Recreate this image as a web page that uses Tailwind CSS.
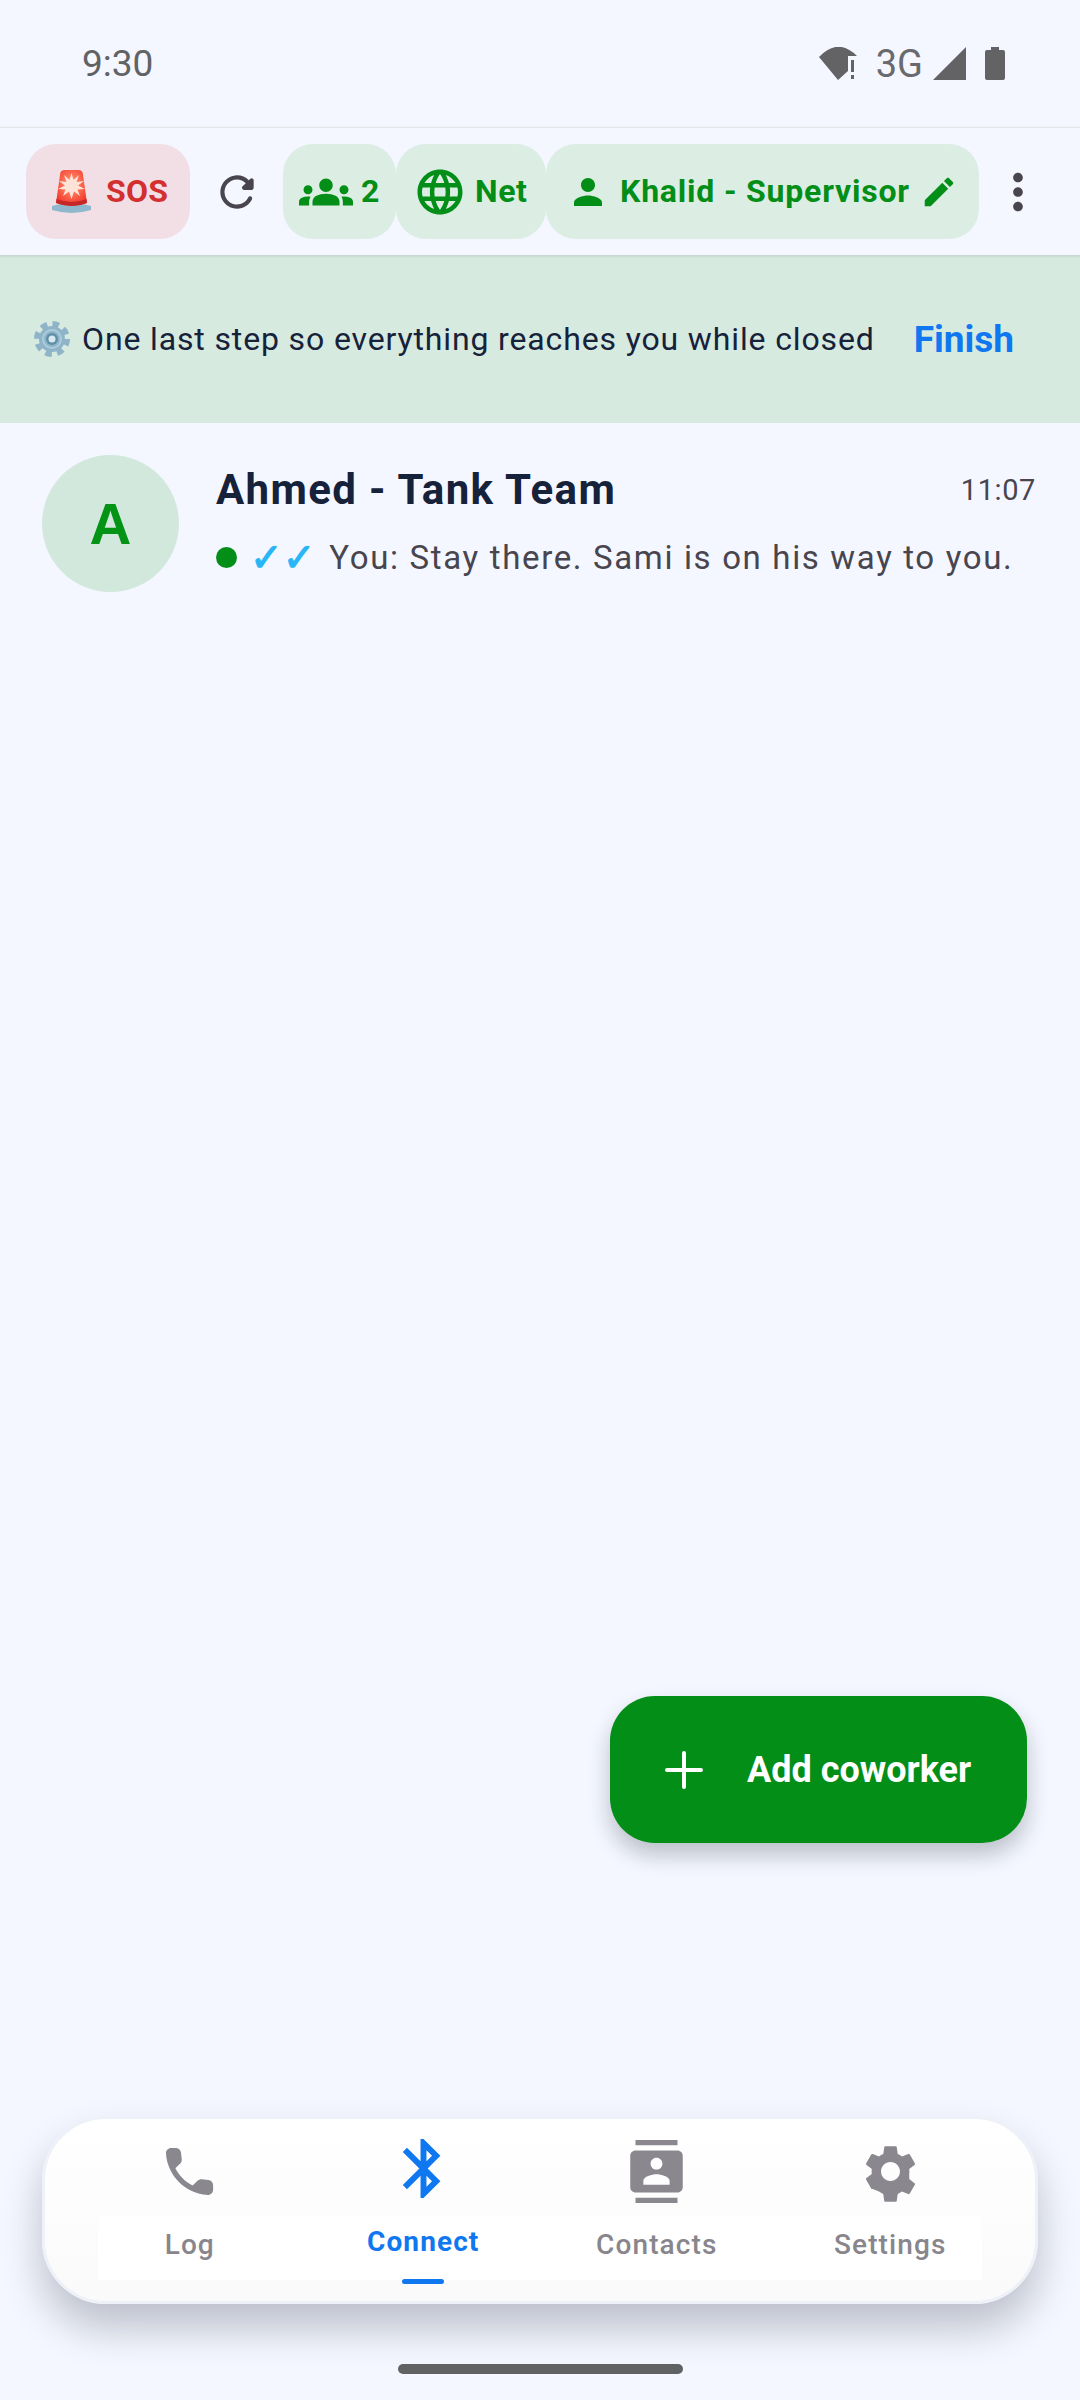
<!doctype html>
<html>
<head>
<meta charset="utf-8">
<script src="https://cdn.jsdelivr.net/npm/@tailwindcss/browser@4"></script>
</head>
<body>
<div class="relative flex flex-col w-[1080px] h-[2400px] overflow-hidden bg-[#f4f7ff] font-['Roboto',sans-serif]">

  <!-- status bar -->
  <div class="flex items-center h-[127px] pl-[82px] pr-[75px] text-[#616264] shrink-0">
    <span class="text-[37px] leading-none">9:30</span>
    <div class="ml-auto flex items-center">
      <svg class="w-[38px] h-[33px]" viewBox="0 0 38 33" fill="#636366"><path d="M0 10Q19 -10 38 9L29 9L29 24L19 33Z"/><rect x="32" y="13" width="3" height="12"/><rect x="32" y="28" width="3" height="4"/></svg>
      <span class="ml-[19px] text-[38px] leading-none text-[#6a6a6e]">3G</span>
      <svg class="ml-[10px] w-[33px] h-[33px]" viewBox="0 0 33 33" fill="#636366"><path d="M0 33L33 0V33Z"/></svg>
      <svg class="ml-[19px] w-[20px] h-[33px]" viewBox="0 0 20 33" fill="#636366"><path d="M6 0H14V3H18Q20 3 20 5V31Q20 33 18 33H2Q0 33 0 31V5Q0 3 2 3H6Z"/></svg>
    </div>
  </div>

  <!-- app bar -->
  <div class="flex items-center h-[128px] pl-[26px] border-t-[1px] border-[#e4e6ea] shrink-0 shadow-[0_1px_3px_rgba(0,0,0,0.12)] relative z-10 bg-[#f4f7ff]">
    <div class="flex items-center w-[164px] h-[95px] rounded-[30px] bg-[#f2dfe5] pl-[26px]">
      <svg class="w-[39px] h-[43px] shrink-0" viewBox="0 0 39 43">
        <defs>
          <radialGradient id="glow" cx="0.5" cy="0.4" r="0.6"><stop offset="0" stop-color="#ffd6c8"/><stop offset="0.35" stop-color="#ff7a5c"/><stop offset="1" stop-color="#f03a2e"/></radialGradient>
        </defs>
        <path d="M0 36Q20 29 39 36V40Q20 46 0 40Z" fill="#8fb8cc"/>
        <path d="M8 5Q8 0 13 0H26Q31 0 31 5L35 33Q20 39 4 33Z" fill="url(#glow)"/>
        <path d="M4.5 29Q20 35 34.5 29L35 33Q20 39 4 33Z" fill="#c62828"/>
        <path d="M19.5 3L21.5 10L27 5L24.5 12L32 11L26 15.5L33 19L25.5 19.5L28 26L22 21.5L19.5 29L17 21.5L11 26L13.5 19.5L6 19L13 15.5L7 11L14.5 12L12 5L17.5 10Z" fill="#ffe3d8"/>
      </svg>
      <span class="ml-[15px] mb-[2px] text-[32px] leading-none font-bold text-[#d32f2f] tracking-[0.3px]">SOS</span>
    </div>
    <svg class="w-[50px] h-[50px] ml-[22px] shrink-0" viewBox="0 0 24 24" fill="#48454e"><path d="M17.65 6.35c-1.63-1.63-3.94-2.57-6.48-2.31-3.67.37-6.69 3.35-7.1 7.02C3.52 15.91 7.27 20 12 20c3.19 0 5.93-1.87 7.21-4.56.32-.67-.16-1.44-.9-1.44-.37 0-.72.2-.88.53-1.13 2.43-3.84 3.97-6.8 3.31-2.22-.49-4.01-2.3-4.48-4.52C5.31 9.44 8.26 6 12 6c1.66 0 3.14.69 4.22 1.78l-1.51 1.51c-.63.63-.19 1.71.7 1.71H19c.55 0 1-.45 1-1V6.41c0-.89-1.08-1.34-1.71-.71l-.64.65z"/></svg>
    <div class="flex items-center w-[113px] h-[95px] ml-[21px] rounded-[30px] bg-[#dcede4] pl-[16px] text-[#038e17]">
      <svg class="w-[54px] h-[54px] shrink-0" viewBox="0 0 24 24" fill="currentColor"><path d="M12 12.75c1.63 0 3.07.39 4.24.9 1.08.48 1.76 1.56 1.76 2.73V18H6v-1.61c0-1.18.68-2.26 1.76-2.73 1.17-.52 2.61-.91 4.24-.91zM4 13c1.1 0 2-.9 2-2s-.9-2-2-2-2 .9-2 2 .9 2 2 2zm1.13 1.1c-.37-.06-.74-.1-1.13-.1-.99 0-1.93.21-2.78.58C.48 14.9 0 15.62 0 16.43V18h4.5v-1.61c0-.83.23-1.61.63-2.29zM20 13c1.1 0 2-.9 2-2s-.9-2-2-2-2 .9-2 2 .9 2 2 2zm4 3.43c0-.81-.48-1.53-1.22-1.85-.85-.37-1.79-.58-2.78-.58-.39 0-.76.04-1.13.1.4.68.63 1.46.63 2.29V18H24v-1.57zM12 6c1.66 0 3 1.34 3 3s-1.34 3-3 3-3-1.34-3-3 1.34-3 3-3z"/></svg>
      <span class="ml-[8px] mb-[2px] text-[32px] leading-none font-bold">2</span>
    </div>
    <div class="flex items-center w-[150px] h-[95px] rounded-[30px] bg-[#dcede4] pl-[17px] text-[#038e17]">
      <svg class="w-[54px] h-[54px] shrink-0" viewBox="0 0 24 24" fill="currentColor"><path d="M11.99 2C6.47 2 2 6.48 2 12s4.47 10 9.99 10C17.52 22 22 17.52 22 12S17.52 2 11.99 2zm6.93 6h-2.95c-.32-1.25-.78-2.45-1.38-3.56 1.84.63 3.37 1.91 4.33 3.56zM12 4.04c.83 1.2 1.48 2.53 1.91 3.96h-3.82c.43-1.43 1.08-2.76 1.91-3.96zM4.26 14C4.1 13.36 4 12.69 4 12s.1-1.36.26-2h3.38c-.08.66-.14 1.32-.14 2 0 .68.06 1.34.14 2H4.26zm.82 2h2.95c.32 1.25.78 2.45 1.38 3.56-1.84-.63-3.37-1.9-4.33-3.56zm2.95-8H5.08c.96-1.66 2.49-2.93 4.33-3.56C8.81 5.55 8.35 6.75 8.03 8zM12 19.96c-.83-1.2-1.48-2.53-1.91-3.96h3.82c-.43 1.43-1.08 2.76-1.91 3.96zM14.34 14H9.66c-.09-.66-.16-1.32-.16-2 0-.68.07-1.35.16-2h4.68c.09.65.16 1.32.16 2 0 .68-.07 1.34-.16 2zm.25 5.56c.6-1.11 1.06-2.31 1.38-3.56h2.95c-.96 1.65-2.49 2.93-4.33 3.56zM16.36 14c.08-.66.14-1.32.14-2 0-.68-.06-1.34-.14-2h3.38c.16.64.26 1.31.26 2s-.1 1.36-.26 2h-3.38z"/></svg>
      <span class="ml-[8px] mb-[2px] text-[32px] leading-none font-bold tracking-[0.6px]">Net</span>
    </div>
    <div class="flex items-center w-[433px] h-[95px] rounded-[30px] bg-[#dcede4] pl-[21px] text-[#038e17]">
      <svg class="w-[42px] h-[42px] shrink-0" viewBox="0 0 24 24" fill="currentColor"><path d="M12 12c2.21 0 4-1.79 4-4s-1.79-4-4-4-4 1.79-4 4 1.79 4 4 4zm0 2c-2.67 0-8 1.34-8 4v2h16v-2c0-2.66-5.33-4-8-4z"/></svg>
      <span class="ml-[11px] mb-[2px] text-[32px] leading-none font-bold tracking-[0.8px] whitespace-pre">Khalid - Supervisor</span>
      <svg class="ml-[10px] w-[38px] h-[38px] shrink-0" viewBox="0 0 24 24" fill="currentColor"><path d="M3 17.25V21h3.75L17.81 9.94l-3.75-3.75L3 17.25zM20.71 7.04c.39-.39.39-1.02 0-1.41l-2.34-2.34c-.39-.39-1.02-.39-1.41 0l-1.83 1.83 3.75 3.75 1.83-1.83z"/></svg>
    </div>
    <svg class="ml-[10px] w-[58px] h-[58px] shrink-0" viewBox="0 0 24 24" fill="#48454e"><path d="M12 8c1.1 0 2-.9 2-2s-.9-2-2-2-2 .9-2 2 .9 2 2 2zm0 2c-1.1 0-2 .9-2 2s.9 2 2 2 2-.9 2-2-.9-2-2-2zm0 6c-1.1 0-2 .9-2 2s.9 2 2 2 2-.9 2-2-.9-2-2-2z"/></svg>
  </div>

  <!-- banner -->
  <div class="flex items-center h-[168px] pl-[34px] bg-[#d6eae0] shrink-0">
    <svg class="w-[36px] h-[36px] shrink-0" viewBox="0 0 36 36">
      <circle cx="18" cy="18" r="15" fill="none" stroke="#8fb4c8" stroke-width="6" stroke-dasharray="6.5 5.28"/>
      <circle cx="18" cy="18" r="13" fill="#8fb4c8"/>
      <circle cx="18" cy="18" r="9" fill="none" stroke="#a9cddd" stroke-width="2"/>
      <circle cx="18" cy="18" r="6" fill="#5d8fa8"/>
      <circle cx="18" cy="18" r="3.5" fill="#dbe9ef"/>
    </svg>
    <span class="ml-[12px] text-[32px] leading-none text-[#16213a] tracking-[0.86px] whitespace-nowrap">One last step so everything reaches you while closed</span>
    <span class="ml-[39px] text-[37px] leading-none font-bold text-[#0f78f0]">Finish</span>
  </div>

  <!-- list -->
  <div class="flex-1 min-h-0">
    <div class="flex items-start pl-[42px] pr-[44px] pt-[32px]">
      <div class="flex items-center justify-center w-[137px] h-[137px] rounded-full bg-[#d2e8dc] shrink-0 text-[58px] leading-none font-bold text-[#039416] font-['Liberation_Sans',sans-serif]">A</div>
      <div class="flex-1 ml-[37px] min-w-0">
        <div class="flex items-center h-[46px] mt-[12px]">
          <span class="text-[42px] leading-none font-bold text-[#16213a] tracking-[1.35px] whitespace-pre">Ahmed - Tank Team</span>
          <span class="ml-auto text-[29px] leading-none text-[#48454e] tracking-[0.6px]">11:07</span>
        </div>
        <div class="flex items-center h-[46px] mt-[21px]">
          <span class="w-[21px] h-[21px] rounded-full bg-[#038e17] shrink-0"></span>
          <span class="ml-[13px] text-[39px] leading-none font-bold text-[#29b6f6] font-['DejaVu_Sans',sans-serif] [-webkit-text-stroke:1.2px_#29b6f6] whitespace-nowrap">✓✓</span>
          <span class="ml-[14px] text-[33px] leading-none text-[#48454e] tracking-[1.65px] whitespace-nowrap">You: Stay there. Sami is on his way to you.</span>
        </div>
      </div>
    </div>
  </div>

  <!-- FAB -->
  <div class="absolute left-[610px] top-[1696px] flex items-center w-[417px] h-[147px] rounded-[45px] bg-[#038e17] pl-[55px] text-white shadow-[0_12px_22px_rgba(10,15,30,0.24)]">
    <svg class="w-[38px] h-[38px] shrink-0" viewBox="0 0 38 38" fill="none" stroke="white" stroke-width="4" stroke-linecap="round"><path d="M19 2V36M2 19H36"/></svg>
    <span class="ml-[44px] text-[36px] leading-none font-bold">Add coworker</span>
  </div>

  <!-- bottom nav -->
  <div class="relative mx-[42px] h-[188px] shrink-0 rounded-[64px] border-[3px] border-[#eef1f8] bg-linear-to-b from-white to-[#fafafb] shadow-[0_24px_40px_rgba(10,15,30,0.23)]">
    <div class="absolute left-[53px] right-[53px] top-[97px] h-[64px] bg-white"></div>
    <div class="relative grid grid-cols-4 h-full px-[28px]">
      <div class="flex flex-col items-center pt-[21px]">
        <svg class="w-[63px] h-[63px]" viewBox="0 0 24 24" fill="#8a888e"><path d="M19.23 15.26l-2.54-.29c-.61-.07-1.21.14-1.64.57l-1.84 1.84c-2.83-1.44-5.15-3.75-6.59-6.59l1.85-1.85c.43-.43.64-1.03.57-1.64l-.29-2.52c-.12-1.01-.97-1.77-1.99-1.77H5.03c-1.13 0-2.07.94-2 2.07.53 8.54 7.36 15.36 15.89 15.89 1.13.07 2.07-.87 2.07-2v-1.73c.01-1.01-.75-1.86-1.76-1.98z"/></svg>
        <span class="mt-[26px] text-[28px] leading-[32px] font-medium text-[#88868c] tracking-[1.1px]">Log</span>
      </div>
      <div class="relative flex flex-col items-center pt-[14px]">
        <svg class="w-[71px] h-[71px]" viewBox="0 0 24 24" fill="#0f78f0"><path d="M17.71 7.71L12 2h-1v7.59L6.41 5 5 6.41 10.59 12 5 17.59 6.41 19 11 14.41V22h1l5.71-5.71-4.3-4.29 4.3-4.29zM13 5.83l1.88 1.88L13 9.59V5.83zm1.88 10.46L13 18.17v-3.76l1.88 1.88z"/></svg>
        <span class="mt-[22px] text-[28px] leading-[32px] font-bold text-[#0f78f0] tracking-[1.1px]">Connect</span>
        <span class="absolute bottom-[17px] w-[42px] h-[5px] rounded-full bg-[#0f78f0]"></span>
      </div>
      <div class="flex flex-col items-center pt-[21px]">
        <svg class="w-[63px] h-[63px]" viewBox="0 0 24 24" fill="#8a888e"><path d="M20 0H4v2h16V0zM4 24h16v-2H4v2zM20 4H4c-1.1 0-2 .9-2 2v12c0 1.1.9 2 2 2h16c1.1 0 2-.9 2-2V6c0-1.1-.9-2-2-2zm-8 2.75c1.24 0 2.25 1.01 2.25 2.25s-1.01 2.25-2.25 2.25S9.75 10.24 9.75 9 10.76 6.75 12 6.75zM17 17H7v-1.5c0-1.67 3.33-2.5 5-2.5s5 .83 5 2.5V17z"/></svg>
        <span class="mt-[26px] text-[28px] leading-[32px] font-medium text-[#88868c] tracking-[1.1px]">Contacts</span>
      </div>
      <div class="flex flex-col items-center pt-[21px]">
        <svg class="w-[63px] h-[63px]" viewBox="0 0 24 24" fill="#8a888e"><path d="M19.14 12.94c.04-.3.06-.61.06-.94 0-.32-.02-.64-.07-.94l2.03-1.58c.18-.14.23-.41.12-.61l-1.92-3.32c-.12-.22-.37-.29-.59-.22l-2.39.96c-.5-.38-1.03-.7-1.62-.94l-.36-2.54c-.04-.24-.24-.41-.48-.41h-3.84c-.24 0-.43.17-.47.41l-.36 2.54c-.59.24-1.13.57-1.62.94l-2.39-.96c-.22-.08-.47 0-.59.22L2.74 8.87c-.12.21-.08.47.12.61l2.03 1.58c-.05.3-.09.63-.09.94s.02.64.07.94l-2.03 1.58c-.18.14-.23.41-.12.61l1.92 3.32c.12.22.37.29.59.22l2.39.96c.5.38 1.03.7 1.62.94l.36 2.54c.05.24.24.41.48.41h3.84c.24 0 .44-.17.47-.41l.36-2.54c.59-.24 1.13-.56 1.62-.94l2.39.96c.22.08.47 0 .59-.22l1.92-3.32c.12-.22.07-.47-.12-.61l-2.01-1.58zM12 15.6c-1.98 0-3.6-1.62-3.6-3.6s1.62-3.6 3.6-3.6 3.6 1.62 3.6 3.6-1.62 3.6-3.6 3.6z"/></svg>
        <span class="mt-[26px] text-[28px] leading-[32px] font-medium text-[#88868c] tracking-[1.1px]">Settings</span>
      </div>
    </div>
  </div>

  <!-- home indicator -->
  <div class="flex justify-center h-[96px] pt-[60px] shrink-0">
    <div class="w-[285px] h-[10px] rounded-full bg-[#616264]"></div>
  </div>
</div>
</body>
</html>
